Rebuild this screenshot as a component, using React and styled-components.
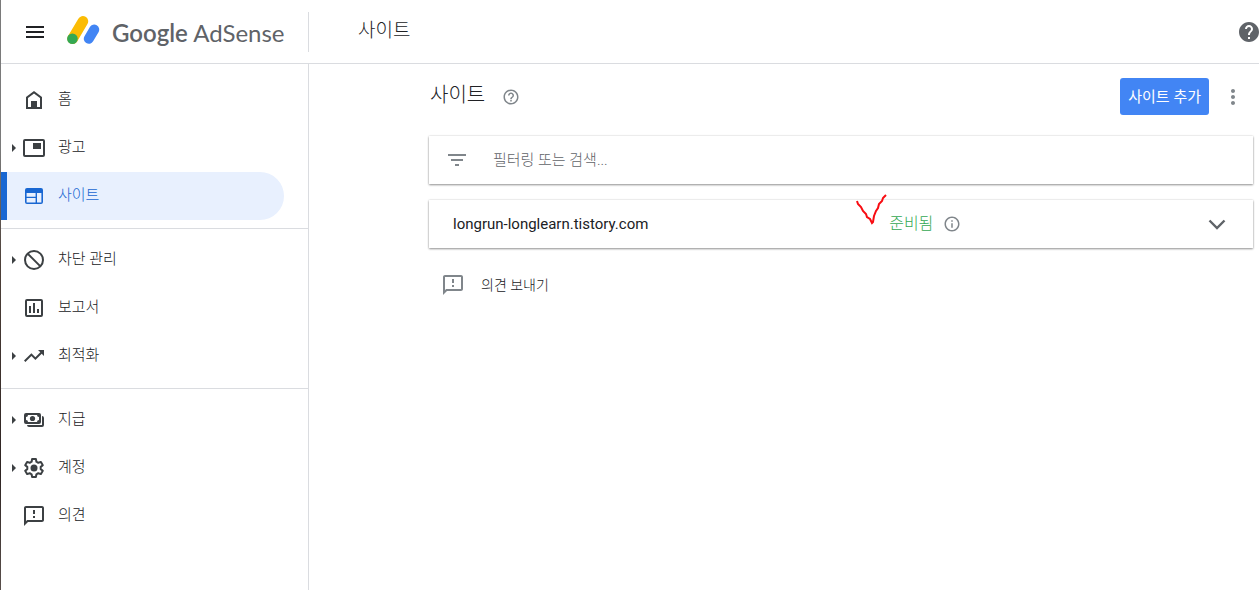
import React from 'react';
import styled, { createGlobalStyle } from 'styled-components';
import {
  MdMenu,
  MdHelp,
  MdHelpOutline,
  MdMoreVert,
  MdFilterList,
  MdInfoOutline,
  MdTrendingUp,
  MdOutlineFeedback,
} from 'react-icons/md';

const COLORS = {
  text: '#202124',
  icon: '#3c4043',
  muted: '#80868b',
  grey: '#5f6368',
  line: '#dadce0',
  blue: '#1967d2',
  blueLight: '#e8f0fe',
  button: '#4285f4',
  green: '#34a853',
};

const GlobalStyle = createGlobalStyle`
  *, *::before, *::after {
    box-sizing: border-box;
  }

  body {
    margin: 0;
    background: #fff;
    color: ${COLORS.text};
    font-family: Roboto, 'Noto Sans CJK KR', sans-serif;
    font-weight: 300;
    font-size: 15px;
    line-height: 24px;
  }

  button, input {
    font: inherit;
    color: inherit;
    border: 0;
    padding: 0;
    background: none;
  }

  button {
    cursor: pointer;
  }

  svg {
    display: block;
    flex-shrink: 0;
  }
`;

const Page = styled.div`
  display: flex;
  flex-direction: column;
  min-height: 100vh;
  border-left: 1px solid #5c5654;
  border-image: linear-gradient(#7a7a7a 25%, #4d4039 45%, #2e2422 80%, #5a504c) 1;
`;

const Header = styled.header`
  display: flex;
  align-items: center;
  height: 64px;
  border-bottom: 1px solid ${COLORS.line};
`;

const Brand = styled.div`
  display: flex;
  align-items: center;
  width: 308px;
  height: 40px;
  padding-left: 22px;
  border-right: 1px solid ${COLORS.line};
`;

const LogoLink = styled.a`
  display: flex;
  align-items: center;
  gap: 12px;
  margin-left: 19px;
  color: ${COLORS.grey};
  text-decoration: none;
`;

const Wordmark = styled.span`
  padding-top: 2px;
  font-family: Lato, sans-serif;
  font-size: 24px;
  font-weight: 400;
  line-height: 32px;
  white-space: nowrap;

  b {
    font-weight: 600;
  }
`;

const HeaderTitle = styled.span`
  flex: 1;
  padding: 0 0 2px 49px;
  font-size: 19px;
`;

const Body = styled.div`
  display: flex;
  flex: 1;
`;

const Sidebar = styled.nav`
  width: 308px;
  padding-top: 12px;
  border-right: 1px solid ${COLORS.line};
`;

const NavGroup = styled.ul`
  list-style: none;
  margin: 0;
  padding: 0 0 8px;

  & + & {
    padding-top: 7px;
    border-top: 1px solid ${COLORS.line};
  }
`;

const NavLink = styled.a`
  display: flex;
  align-items: center;
  height: 48px;
  margin-right: 24px;
  padding-left: ${(p) => (p.$active ? 5 : 11)}px;
  border-left: ${(p) => (p.$active ? `6px solid ${COLORS.blue}` : 0)};
  border-radius: 0 24px 24px 0;
  background: ${(p) => (p.$active ? COLORS.blueLight : 'transparent')};
  color: ${(p) => (p.$active ? COLORS.blue : COLORS.text)};
  text-decoration: none;

  svg {
    color: ${(p) => (p.$active ? COLORS.blue : COLORS.icon)};
  }
`;

const Arrow = styled.span`
  width: 10px;

  &::before {
    content: '';
    display: ${(p) => (p.$show ? 'block' : 'none')};
    width: 0;
    border: solid transparent;
    border-width: 4px 0 4px 4px;
    border-left-color: ${COLORS.icon};
  }
`;

const NavLabel = styled.span`
  padding: 0 0 3px 12px;
`;

const Main = styled.main`
  flex: 1;
  min-width: 0;
  padding: 14px 6px 0 120px;
`;

const TitleRow = styled.div`
  display: flex;
  align-items: center;
  margin-bottom: 21px;
  padding-right: 8px;
`;

const Title = styled.h1`
  margin: 0;
  padding: 0 0 4px 1px;
  font-size: 20px;
  font-weight: 300;
`;

const IconButton = styled.button`
  display: flex;
  color: ${(p) => p.$color || COLORS.muted};
`;

const TitleHelp = styled(IconButton)`
  margin: 0 auto 0 17px;
`;

const AddButton = styled.button`
  height: 37px;
  margin-right: 12px;
  padding: 0 8px;
  border-radius: 3px;
  background: ${COLORS.button};
  color: #fff;
  font-weight: 400;
`;

const Card = styled.div`
  height: 48px;
  margin-bottom: 16px;
  background: #fff;
  box-shadow: 0 1px 2px rgba(0, 0, 0, 0.4), 0 0 2px rgba(0, 0, 0, 0.15);
`;

const FilterCard = styled(Card)`
  display: flex;
  align-items: center;
  gap: 24px;
  padding: 0 16px;
  color: ${COLORS.muted};
`;

const FilterInput = styled.input`
  flex: 1;
  height: 48px;
  outline: none;
  color: ${COLORS.text};

  &::placeholder {
    color: ${COLORS.grey};
    opacity: 1;
  }
`;

const SiteCard = styled(Card)`
  display: grid;
  grid-template-columns: 58fr 42fr 24px;
  align-items: center;
  padding: 0 24px;
`;

const SiteName = styled.span`
  font-weight: 400;
`;

const Status = styled.div`
  position: relative;
  display: flex;
  align-items: center;
  gap: 10px;
  height: 48px;
  color: ${COLORS.green};
  font-size: 16px;
`;

const CheckMark = styled.svg`
  position: absolute;
  top: -8px;
  left: -34px;
`;

const Feedback = styled.button`
  display: flex;
  align-items: center;
  gap: 16px;
  margin-top: 25px;
  padding-left: 12px;
  font-size: 14px;

  svg {
    color: ${COLORS.muted};
  }
`;

function Logo() {
  return (
    <svg width="34" height="32" viewBox="0 0 34 32" fill="none" strokeLinecap="round">
      <path d="M6.6 22.8 16.9 5.4" stroke="#fbbc04" strokeWidth="10.6" />
      <path d="M22.8 22.8 28.2 13.6" stroke="#4285f4" strokeWidth="10" />
      <circle cx="6.4" cy="22.8" r="5.3" fill="#34a853" />
    </svg>
  );
}

function NavIcon({ children }) {
  return (
    <svg width="24" height="24" viewBox="0 0 24 24" fill="currentColor" fillRule="evenodd">
      {children}
    </svg>
  );
}

const HomeIcon = () => (
  <NavIcon>
    <path d="M12 3 4 9v12h16V9zm0 2.4 6 4.5V19h-3v-6H9v6H6V9.9z" />
    <path d="M9 13h6v6H9z" />
  </NavIcon>
);

const AdsIcon = () => (
  <NavIcon>
    <path d="M3 3h18a2 2 0 0 1 2 2v14a2 2 0 0 1-2 2H3a2 2 0 0 1-2-2V5a2 2 0 0 1 2-2zm0 2v14h18V5z" />
    <path d="M11 7h8v6h-8z" />
  </NavIcon>
);

const SitesIcon = () => (
  <NavIcon>
    <path d="M5 4h14a2 2 0 0 1 2 2v12a2 2 0 0 1-2 2H5a2 2 0 0 1-2-2V6a2 2 0 0 1 2-2zm-.4 5v3.8h9V9zm0 5v4.4h9V14zm10.4-5v9.4h4.4V9z" />
  </NavIcon>
);

const BlockIcon = () => (
  <NavIcon>
    <circle cx="12" cy="12" r="9" fill="none" stroke="currentColor" strokeWidth="2" />
    <path d="M5.6 5.6l12.8 12.8" stroke="currentColor" strokeWidth="2" />
  </NavIcon>
);

const ReportIcon = () => (
  <NavIcon>
    <path d="M5 3h14a2 2 0 0 1 2 2v14a2 2 0 0 1-2 2H5a2 2 0 0 1-2-2V5a2 2 0 0 1 2-2zm0 2v14h14V5z" />
    <path d="M7 10h2v7H7zM11 7h2v10h-2zM15 13h2v4h-2z" />
  </NavIcon>
);

const PaymentsIcon = () => (
  <NavIcon>
    <path d="M4 5h13a2 2 0 0 1 2 2v7a2 2 0 0 1-2 2H4a2 2 0 0 1-2-2V7a2 2 0 0 1 2-2zm2 2a2 2 0 0 1-2 2v3a2 2 0 0 1 2 2h9a2 2 0 0 1 2-2V9a2 2 0 0 1-2-2z" />
    <circle cx="10.5" cy="10.5" r="2.6" />
    <path d="M20 8a2 2 0 0 1 2 2v7a2 2 0 0 1-2 2H7a2 2 0 0 1-2-2h15z" />
  </NavIcon>
);

const AccountIcon = () => (
  <NavIcon>
    <path
      d="M10.1 3h3.8l.5 2.7 1.9 1.1 2.6-.9 1.9 3.3-2.1 1.7v2.2l2.1 1.7-1.9 3.3-2.6-.9-1.9 1.1-.5 2.7h-3.8l-.5-2.7-1.9-1.1-2.6.9-1.9-3.3 2.1-1.7v-2.2L3.2 9.2l1.9-3.3 2.6.9 1.9-1.1z"
      fill="none"
      stroke="currentColor"
      strokeWidth="2"
      strokeLinejoin="round"
    />
    <circle cx="12" cy="12" r="3.5" />
  </NavIcon>
);

const NAV_GROUPS = [
  [
    { label: '홈', icon: <HomeIcon /> },
    { label: '광고', icon: <AdsIcon />, expandable: true },
    { label: '사이트', icon: <SitesIcon />, active: true },
  ],
  [
    { label: '차단 관리', icon: <BlockIcon />, expandable: true },
    { label: '보고서', icon: <ReportIcon /> },
    { label: '최적화', icon: <MdTrendingUp size={24} />, expandable: true },
  ],
  [
    { label: '지급', icon: <PaymentsIcon />, expandable: true },
    { label: '계정', icon: <AccountIcon />, expandable: true },
    { label: '의견', icon: <MdOutlineFeedback size={24} /> },
  ],
];

export default function App() {
  return (
    <>
      <GlobalStyle />
      <Page>
        <Header>
          <Brand>
            <IconButton aria-label="메뉴" $color={COLORS.text}>
              <MdMenu size={24} />
            </IconButton>
            <LogoLink href="#home">
              <Logo />
              <Wordmark>
                <b>Google</b> AdSense
              </Wordmark>
            </LogoLink>
          </Brand>
          <HeaderTitle>사이트</HeaderTitle>
          <IconButton aria-label="도움말" $color={COLORS.grey}>
            <MdHelp size={20} viewBox="2 2 20 20" />
          </IconButton>
        </Header>
        <Body>
          <Sidebar>
            {NAV_GROUPS.map((group) => (
              <NavGroup key={group[0].label}>
                {group.map((item) => (
                  <li key={item.label}>
                    <NavLink
                      href={`#${item.label}`}
                      $active={item.active}
                      aria-current={item.active ? 'page' : undefined}
                    >
                      <Arrow $show={item.expandable} />
                      {item.icon}
                      <NavLabel>{item.label}</NavLabel>
                    </NavLink>
                  </li>
                ))}
              </NavGroup>
            ))}
          </Sidebar>
          <Main>
            <TitleRow>
              <Title>사이트</Title>
              <TitleHelp aria-label="도움말">
                <MdHelpOutline size={18} />
              </TitleHelp>
              <AddButton>사이트 추가</AddButton>
              <IconButton aria-label="더보기">
                <MdMoreVert size={24} />
              </IconButton>
            </TitleRow>
            <FilterCard>
              <MdFilterList size={24} />
              <FilterInput type="text" aria-label="필터링 또는 검색" placeholder="필터링 또는 검색..." />
            </FilterCard>
            <SiteCard>
              <SiteName>longrun-longlearn.tistory.com</SiteName>
              <Status>
                준비됨
                <IconButton aria-label="정보">
                  <MdInfoOutline size={18} />
                </IconButton>
                <CheckMark width="34" height="36" viewBox="0 0 34 36" fill="none" stroke="#f80c12" strokeWidth="2">
                  <path d="M2 9l1 3 3 3 2 4 3 3 1 3 3 2 2 4 1-1 1-6 2-5 2-3 1-4 3-3 1-3 3-3" />
                </CheckMark>
              </Status>
              <IconButton aria-label="펼치기" $color={COLORS.grey}>
                <svg width="24" height="24" viewBox="0 0 24 24" fill="none" stroke="currentColor" strokeWidth="2.4">
                  <path d="M4.5 8.5 12 16l7.5-7.5" />
                </svg>
              </IconButton>
            </SiteCard>
            <Feedback>
              <MdOutlineFeedback size={24} />
              의견 보내기
            </Feedback>
          </Main>
        </Body>
      </Page>
    </>
  );
}
